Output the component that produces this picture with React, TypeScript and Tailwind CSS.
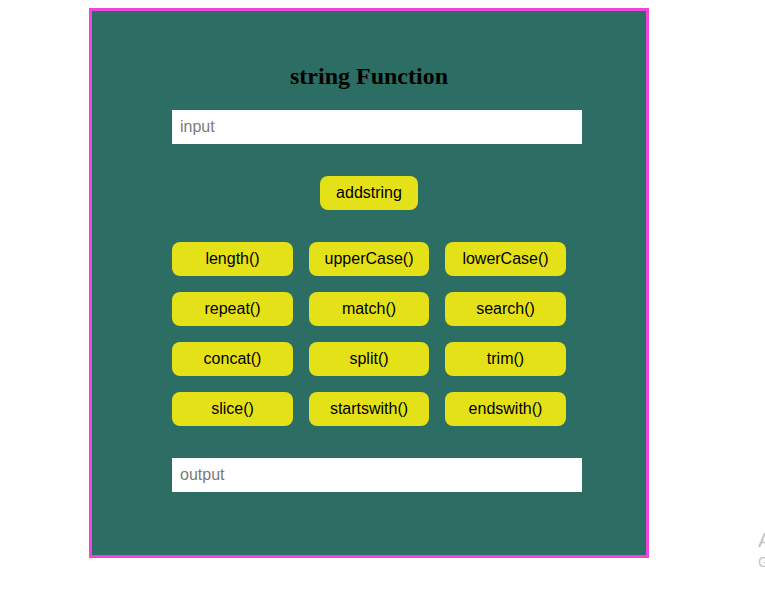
const methods = [
  'length()', 'upperCase()', 'lowerCase()',
  'repeat()', 'match()', 'search()',
  'concat()', 'split()', 'trim()',
  'slice()', 'startswith()', 'endswith()',
]

export default function App() {
  return (
    <div className="relative w-[765px] h-[603px] overflow-hidden bg-white font-['Liberation_Sans',Arial,sans-serif]">
      {/* main card */}
      <div className="ml-[89px] mt-[8px] w-[560px] h-[550px] border-[3px] border-[#ef45dc] bg-[#2c6e63] px-[80px] pt-[51px] flex flex-col">
        <h2 className="text-center font-['Liberation_Serif','Times_New_Roman',serif] font-bold text-[24px] leading-[28px] text-black">
          string Function
        </h2>

        <input
          placeholder="input"
          className="mt-[20px] w-[410px] h-[34px] bg-white px-[8px] text-[16px] text-black placeholder:text-[#7a7a7a] outline-none"
        />

        <div className="mt-[32px] flex justify-center">
          <button className="w-[98px] h-[34px] rounded-[8px] bg-[#e5e118] text-[16px] text-black">
            addstring
          </button>
        </div>

        <div className="mt-[32px] grid grid-cols-[121px_120px_121px] gap-x-[16px] gap-y-[16px]">
          {methods.map(m => (
            <button key={m} className="h-[34px] rounded-[8px] bg-[#e5e118] text-[16px] text-black">
              {m}
            </button>
          ))}
        </div>

        <input
          placeholder="output"
          className="mt-[32px] w-[410px] h-[34px] bg-white px-[8px] text-[16px] text-black placeholder:text-[#7a7a7a] outline-none"
        />
      </div>

      {/* windows watermark, cut off at the edge */}
      <div className="absolute left-[758px] top-[527px] whitespace-nowrap text-[#c4c4c4] font-['Liberation_Sans',sans-serif]">
        <div className="text-[21px] leading-[25px]">Activate Windows</div>
        <div className="text-[14px] leading-[18px] mt-[1px]">Go to Settings to activate Windows.</div>
      </div>
    </div>
  )
}
